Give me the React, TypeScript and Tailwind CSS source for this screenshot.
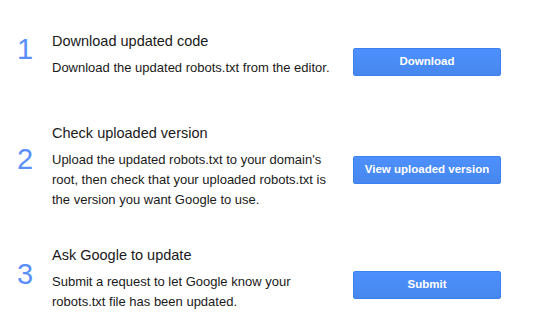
const steps = [
  {
    n: '1',
    title: 'Download updated code',
    body: 'Download the updated robots.txt from the editor.',
    action: 'Download',
    rowClass: 'pt-[32px]',
    numClass: 'mt-[3px]',
    btnClass: 'mt-[16px]',
  },
  {
    n: '2',
    title: 'Check uploaded version',
    body: "Upload the updated robots.txt to your domain's root, then check that your uploaded robots.txt is the version you want Google to use.",
    action: 'View uploaded version',
    rowClass: 'pt-[46px]',
    numClass: 'mt-[21px]',
    btnClass: 'mt-[32px]',
  },
  {
    n: '3',
    title: 'Ask Google to update',
    body: 'Submit a request to let Google know your robots.txt file has been updated.',
    action: 'Submit',
    rowClass: 'pt-[36px]',
    numClass: 'mt-[14px]',
    btnClass: 'mt-[25px]',
  },
]

export default function App() {
  return (
    <div className="w-[548px] h-[332px] bg-white font-['Liberation_Sans',Arial,sans-serif] text-[#1a1a1a]">
      {steps.map((s) => (
        <div key={s.n} className={`flex items-start ${s.rowClass}`}>
          <div className={`w-[52px] shrink-0 pl-[17px] text-[29px] leading-none text-[#5b8ff9] ${s.numClass}`}>
            {s.n}
          </div>
          <div className="w-[290px] shrink-0">
            <div className="text-[14.5px] leading-[18px]">{s.title}</div>
            <p className="mt-2 text-[13px] leading-[20px]">{s.body}</p>
          </div>
          <button
            className={`ml-[11px] w-[148px] h-[28px] shrink-0 rounded-[2px] border border-[#3b82f0] bg-gradient-to-b from-[#4d90fe] to-[#4787ed] text-white text-[11.5px] font-bold ${s.btnClass}`}
          >
            {s.action}
          </button>
        </div>
      ))}
    </div>
  )
}
